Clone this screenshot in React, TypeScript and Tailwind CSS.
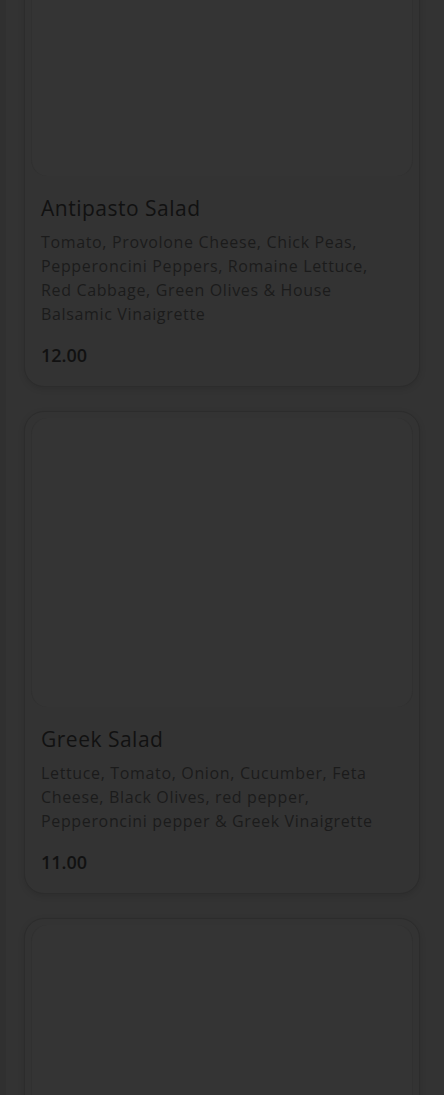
import React from "react";

type Item = { name: string; desc: string; price: string };

const items: Item[] = [
  {
    name: "Antipasto Salad",
    desc: "Tomato, Provolone Cheese, Chick Peas, Pepperoncini Peppers, Romaine Lettuce, Red Cabbage, Green Olives & House Balsamic Vinaigrette",
    price: "12.00",
  },
  {
    name: "Greek Salad",
    desc: "Lettuce, Tomato, Onion, Cucumber, Feta Cheese, Black Olives, red pepper, Pepperoncini pepper & Greek Vinaigrette",
    price: "11.00",
  },
];

function Card({ item }: { item?: Item }) {
  return (
    <div className="rounded-[20px] border border-[#2c2c2c] bg-[#333333] shadow-[0_2px_6px_rgba(0,0,0,0.12)]">
      <div className="m-[6px] h-[289px] rounded-[16px] border-x border-[#303030] bg-[#343434]" />
      {item ? (
        <div className="px-4 pb-[17px] pt-3">
          <h3 className="text-[21px] leading-[28px] font-medium tracking-[0.5px] text-[#111111]">{item.name}</h3>
          <p className="mt-2 text-[16px] leading-[24px] tracking-[0.65px] text-[#1b1b1b]">{item.desc}</p>
          <div className="mt-[15px] text-[18px] leading-[28px] font-semibold text-[#111111]">{item.price}</div>
        </div>
      ) : (
        <div className="h-[160px]" />
      )}
    </div>
  );
}

export default function App() {
  return (
    <div
      className="h-[1095px] overflow-hidden bg-[#333333] border-l-[6px] border-[#303030]"
      style={{ fontFamily: '"Open Sans", "Liberation Sans", sans-serif' }}
    >
      <div className="-mt-[120px] flex flex-col gap-6 pl-[18px] pr-6">
        {items.map((it) => (
          <Card key={it.name} item={it} />
        ))}
        <Card />
      </div>
    </div>
  );
}
